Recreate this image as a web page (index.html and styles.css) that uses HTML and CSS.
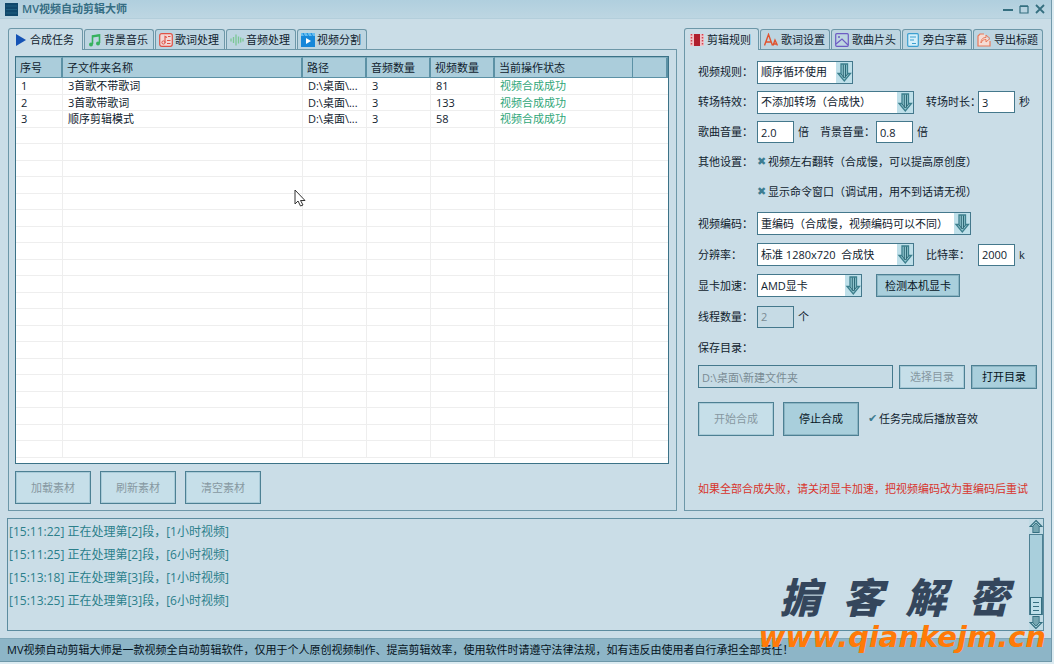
FILE: index.html
```html
<!DOCTYPE html>
<html lang="zh-CN">
<head>
<meta charset="utf-8">
<title>MV视频自动剪辑大师</title>
<link rel="stylesheet" href="styles.css">
</head>
<body>
<svg class="defs" aria-hidden="true">
  <symbol id="arrow-down" viewBox="0 0 16 20">
    <path d="M5 1.500h6.500V11h3L8.300 18.500 2 11h3z" fill="#8fc4cd" stroke="#3d7f8d" stroke-width="1.300"/>
    <path d="M7.300 2v13M9.500 2v13M5 11.500l3.300 4 3.300-4" fill="none" stroke="#2d6876" stroke-width="1"/>
  </symbol>
  <symbol id="scroll-up" viewBox="0 0 14 14">
    <path d="M7 1 13 7h-3v6H4V7H1z" fill="#a9d2da" stroke="#356f80" stroke-width="1.200"/>
    <path d="M6 4v9M8 4v9M4 6.500l3-3 3 3" fill="none" stroke="#356f80" stroke-width=".9"/>
  </symbol>
</svg>
<div class="window">
  <header class="titlebar">
    <svg class="app-icon" width="13" height="13" viewBox="0 0 13 13"><path fill="#10486b" d="M0 0h13v13H0z"/><path d="M1 3h11M1 6.500h11M1 10h11" stroke="#1f5f80"/></svg>
    <h1>MV视频自动剪辑大师</h1>
    <div class="window-buttons">
      <button aria-label="最小化"><svg width="10" height="10"><path d="M0 6h10" stroke="#356f80" stroke-width="2"/></svg></button>
      <button aria-label="最大化"><svg width="10" height="10"><path d="M1 2.500h8v6.500H1z" fill="none" stroke="#356f80" stroke-width="1.200"/><path d="M1 2h8" stroke="#356f80" stroke-width="1.500"/></svg></button>
      <button aria-label="关闭"><svg width="10" height="10"><path d="m1 1 8 8M9 1 1 9" stroke="#356f80" stroke-width="1.800"/></svg></button>
    </div>
  </header>

  <main class="workspace">
    <section class="group tasks">
      <div class="tabs" role="tablist">
        <button class="tab active" role="tab" aria-selected="true"><svg viewBox="0 0 14 14"><path d="M2 1v12l10-6z" fill="#1553b5"/></svg>合成任务</button>
        <button class="tab" role="tab"><svg viewBox="0 0 14 14"><path d="M4.500 11V3l7-1v8" fill="none" stroke="#36b25e" stroke-width="1.600"/><path d="M4.500 3.500l7-1" stroke="#36b25e" stroke-width="2"/><circle cx="3" cy="11.500" r="2" fill="#36b25e"/><circle cx="10" cy="10.500" r="2" fill="#36b25e"/></svg>背景音乐</button>
        <button class="tab" role="tab"><svg viewBox="0 0 14 14"><rect x=".7" y=".7" width="12.600" height="12.600" rx="2" fill="#f3d8d6" stroke="#e05245" stroke-width="1.200"/><path d="M6 10V3.500l2 1M8 7.500h3.500M8 10.500h3.500M9 3.500h2.500" fill="none" stroke="#e05245" stroke-width="1.100"/><circle cx="4.500" cy="9.500" r="1.600" fill="none" stroke="#e05245"/></svg>歌词处理</button>
        <button class="tab" role="tab"><svg viewBox="0 0 14 14"><path d="M1 5.500v3M3.500 4v6M6 1.500v11M8.500 3.500v7M10.700 4.500v5M13 5.500v3" stroke="#7cc795" stroke-width="1.300"/></svg>音频处理</button>
        <button class="tab" role="tab"><svg viewBox="0 0 14 14"><path fill="#1687d9" d="M0 2h14v12H0z"/><path fill="#66bdf0" d="M0 0h14v3H0z"/><path d="m2 0 1.500 3M6 0l1.500 3M10 0l1.500 3" stroke="#1687d9"/><path d="M5 5v6l5-3z" fill="#fff"/></svg>视频分割</button>
      </div>
      <div class="panel task-panel" role="tabpanel">
        <div class="table-box">
          <table>
            <colgroup><col class="c-no"><col><col class="c-path"><col class="c-num"><col class="c-num"><col class="c-state"><col class="c-end"></colgroup>
            <thead><tr><th>序号</th><th>子文件夹名称</th><th>路径</th><th>音频数量</th><th>视频数量</th><th>当前操作状态</th><th></th></tr></thead>
            <tbody>
              <tr><td>1</td><td>3首歌不带歌词</td><td>D:\桌面\...</td><td>3</td><td>81</td><td class="ok">视频合成成功</td><td></td></tr>
              <tr><td>2</td><td>3首歌带歌词</td><td>D:\桌面\...</td><td>3</td><td>133</td><td class="ok">视频合成成功</td><td></td></tr>
              <tr><td>3</td><td>顺序剪辑模式</td><td>D:\桌面\...</td><td>3</td><td>58</td><td class="ok">视频合成成功</td><td></td></tr>
              <tr><td></td><td></td><td></td><td></td><td></td><td></td><td></td></tr>
              <tr><td></td><td></td><td></td><td></td><td></td><td></td><td></td></tr>
              <tr><td></td><td></td><td></td><td></td><td></td><td></td><td></td></tr>
              <tr><td></td><td></td><td></td><td></td><td></td><td></td><td></td></tr>
              <tr><td></td><td></td><td></td><td></td><td></td><td></td><td></td></tr>
              <tr><td></td><td></td><td></td><td></td><td></td><td></td><td></td></tr>
              <tr><td></td><td></td><td></td><td></td><td></td><td></td><td></td></tr>
              <tr><td></td><td></td><td></td><td></td><td></td><td></td><td></td></tr>
              <tr><td></td><td></td><td></td><td></td><td></td><td></td><td></td></tr>
              <tr><td></td><td></td><td></td><td></td><td></td><td></td><td></td></tr>
              <tr><td></td><td></td><td></td><td></td><td></td><td></td><td></td></tr>
              <tr><td></td><td></td><td></td><td></td><td></td><td></td><td></td></tr>
              <tr><td></td><td></td><td></td><td></td><td></td><td></td><td></td></tr>
              <tr><td></td><td></td><td></td><td></td><td></td><td></td><td></td></tr>
              <tr><td></td><td></td><td></td><td></td><td></td><td></td><td></td></tr>
              <tr><td></td><td></td><td></td><td></td><td></td><td></td><td></td></tr>
              <tr><td></td><td></td><td></td><td></td><td></td><td></td><td></td></tr>
              <tr><td></td><td></td><td></td><td></td><td></td><td></td><td></td></tr>
              <tr><td></td><td></td><td></td><td></td><td></td><td></td><td></td></tr>
              <tr><td></td><td></td><td></td><td></td><td></td><td></td><td></td></tr>
            </tbody>
          </table>
        </div>
        <div class="actions">
          <button class="btn large" disabled>加载素材</button>
          <button class="btn large" disabled>刷新素材</button>
          <button class="btn large" disabled>清空素材</button>
        </div>
      </div>
    </section>

    <section class="group rules">
      <div class="tabs" role="tablist">
        <button class="tab active" role="tab" aria-selected="true"><svg viewBox="0 0 14 14"><path fill="#f0c3c8" d="M0 1h14v12H0z"/><path fill="#b01f2e" d="M4 1h6v12H4z"/><path d="M1.500 1v12M12.500 1v12" stroke="#d04452" stroke-width="1.500" stroke-dasharray="1.500 1.500"/></svg>剪辑规则</button>
        <button class="tab" role="tab"><svg viewBox="0 0 14 14"><path d="M.5 12.500 4.500 1.500l4 11M2 9h5M9 12.500l2-5.500 2.500 5.500M9.500 11h3.500" fill="none" stroke="#e0532f" stroke-width="1.400"/></svg>歌词设置</button>
        <button class="tab" role="tab"><svg viewBox="0 0 14 14"><rect x=".7" y=".7" width="12.600" height="12.600" rx="1" fill="none" stroke="#6d5cc4" stroke-width="1.200"/><path d="m1 11 6-5 6 6" fill="none" stroke="#6d5cc4" stroke-width="1.200"/><circle cx="4" cy="4" r="1" fill="#6d5cc4"/></svg>歌曲片头</button>
        <button class="tab" role="tab"><svg viewBox="0 0 14 14"><rect x="1.700" y=".7" width="10.600" height="12.600" rx="1" fill="#d4effb" stroke="#3d9fd0" stroke-width="1.200"/><path d="M4 4h6M4 7h4M6 10.500h4" stroke="#3d9fd0" stroke-width="1.200"/></svg>旁白字幕</button>
        <button class="tab" role="tab"><svg viewBox="0 0 14 14"><path d="M7 1H3L1 3v10h12V8" fill="#f5dcd5" stroke="#ea7a5b" stroke-width="1.200"/><path d="M4 10c0-4 2-5.500 5-5.500V2l4 3.500L9 9V6.500c-2 0-4 .5-5 3.500z" fill="none" stroke="#ea7a5b"/></svg>导出标题</button>
      </div>
      <div class="panel rule-panel" role="tabpanel">
        <div class="rows">
          <div class="row"><label for="rule">视频规则：</label><span class="combo"><select id="rule" class="w-s"><option>顺序循环使用</option></select><svg><use href="#arrow-down"/></svg></span></div>
          <div class="row"><label for="fx">转场特效：</label><span class="combo"><select id="fx" class="w-m"><option>不添加转场（合成快）</option></select><svg><use href="#arrow-down"/></svg></span><label class="second" for="fxlen">转场时长：</label><input class="num" id="fxlen" value="3"><span class="unit">秒</span></div>
          <div class="row"><label for="vol">歌曲音量：</label><input class="num" id="vol" value="2.0"><span class="unit">倍</span><label class="third" for="bgvol">背景音量：</label><input class="num" id="bgvol" value="0.8"><span class="unit">倍</span></div>
          <div class="row"><span class="label">其他设置：</span><label class="check"><input type="checkbox">视频左右翻转（合成慢，可以提高原创度）</label></div>
          <div class="row"><span class="label"></span><label class="check"><input type="checkbox">显示命令窗口（调试用，用不到话请无视）</label></div>
        </div>
        <div class="rows tall">
          <div class="row"><label for="codec">视频编码：</label><span class="combo"><select id="codec" class="w-l"><option>重编码（合成慢，视频编码可以不同）</option></select><svg><use href="#arrow-down"/></svg></span></div>
          <div class="row"><label for="res">分辨率：</label><span class="combo"><select id="res" class="w-m"><option>标准 1280x720&nbsp; 合成快</option></select><svg><use href="#arrow-down"/></svg></span><label class="second" for="rate">比特率：</label><input class="num" id="rate" value="2000"><span class="unit">k</span></div>
          <div class="row"><label for="gpu">显卡加速：</label><span class="combo"><select id="gpu" class="w-g"><option>AMD显卡</option></select><svg><use href="#arrow-down"/></svg></span><button class="btn detect">检测本机显卡</button></div>
          <div class="row"><label for="threads">线程数量：</label><input class="num" id="threads" value="2" disabled><span class="unit">个</span></div>
          <div class="row"><label for="dir">保存目录：</label></div>
        </div>
        <div class="dir-row"><input id="dir" value="D:\桌面\新建文件夹" disabled><button class="btn" disabled>选择目录</button><button class="btn">打开目录</button></div>
        <div class="run-row"><button class="btn large" disabled>开始合成</button><button class="btn large">停止合成</button><label class="check"><input type="checkbox" checked>任务完成后播放音效</label></div>
        <p class="warning">如果全部合成失败，请关闭显卡加速，把视频编码改为重编码后重试</p>
      </div>
    </section>
  </main>

  <section class="log">
    <ul>
      <li>[15:11:22] 正在处理第[2]段，[1小时视频]</li>
      <li>[15:11:25] 正在处理第[2]段，[6小时视频]</li>
      <li>[15:13:18] 正在处理第[3]段，[1小时视频]</li>
      <li>[15:13:25] 正在处理第[3]段，[6小时视频]</li>
    </ul>
    <div class="scrollbar">
      <svg><use href="#scroll-up"/></svg>
      <div class="track"><div class="thumb"></div></div>
      <svg class="flip"><use href="#scroll-up"/></svg>
    </div>
  </section>

  <footer class="status">MV视频自动剪辑大师是一款视频全自动剪辑软件，仅用于个人原创视频制作、提高剪辑效率，使用软件时请遵守法律法规，如有违反由使用者自行承担全部责任！</footer>

  <div class="watermark">
    <div class="mark-name"><span>掮</span><span>客</span><span>解</span><span>密</span></div>
    <div class="mark-url">www.qiankejm.cn</div>
  </div>
  <svg class="cursor" width="12" height="18" viewBox="0 0 12 18"><path d="M1 1v14l3-3 2.500 5 2.500-1-2.500-4.500H11z" fill="#fff" stroke="#333"/></svg>
</div>
</body>
</html>
```
FILE: styles.css
```css
* { box-sizing: border-box; }

body {
  margin: 0;
  background: #dcebf1;
  color: #10222e;
  font: 11px/16px "Open Sans", "Noto Sans CJK SC", sans-serif;
}

button, input, select { font: inherit; color: inherit; margin: 0; }
h1, p, ul { margin: 0; padding: 0; }
ul { list-style: none; }
.defs { display: none; }

.window {
  position: relative;
  display: flex;
  flex-direction: column;
  min-height: calc(100vh - 2px);
  margin-right: 2px;
  border-right: 1px solid #7299ab;
  background: #cadde7;
  overflow: hidden;
}

.titlebar {
  display: flex;
  align-items: center;
  gap: 4px;
  height: 19px;
  padding: 0 6px 0 5px;
  background: linear-gradient(#b0cfde, #bdd6e2);
  border-bottom: 1px solid #b3cedb;
}
.titlebar h1 { font-size: 11px; font-weight: 600; color: #356d83; }
.window-buttons { display: flex; gap: 6px; margin-left: auto; }
.window-buttons button { display: flex; padding: 0; border: 0; background: none; }

.workspace { display: flex; flex: 1; gap: 7px; padding: 9px 8px 0; }
.group { display: flex; flex-direction: column; }
.tasks { flex: 1; min-width: 0; }
.rules { flex: none; }

.tabs { display: flex; align-items: flex-end; gap: 1px; height: 21px; }
.tab {
  display: flex;
  align-items: center;
  gap: 2px;
  width: 70px;
  height: 20px;
  padding: 0 0 0 3px;
  white-space: nowrap;
  border: 1px solid #6d97a8;
  border-bottom: 0;
  border-radius: 3px 3px 0 0;
  background: #bdd5e1;
}
.tab.active {
  position: relative;
  width: 75px;
  height: 22px;
  margin-bottom: -1px;
  padding-left: 5px;
  background: #cadde7;
}
.rules .tab { gap: 3px; }
.tab svg { width: 14px; height: 14px; flex: none; }

.panel { flex: 1; border: 1px solid #6d97a8; }
.task-panel { display: flex; flex-direction: column; padding: 6px 7px 6px 6px; }
.table-box { flex: 1; border: 1px solid #3b7287; background: #fff; }
table { width: 100%; table-layout: fixed; border-collapse: separate; border-spacing: 0; }
.c-no { width: 47px; }
.c-path { width: 64px; }
.c-num { width: 64px; }
.c-state { width: 138px; }
.c-end { width: 35px; }
th {
  height: 21px;
  padding: 0 4px;
  text-align: left;
  font-weight: 400;
  line-height: 16px;
  background: #abcddb;
  border-right: 2px solid #5c91a5;
  border-top: 1px solid #87b1c1;
  border-bottom: 1px solid #5c91a5;
}
th:nth-child(6) { border-right-width: 1px; }
td {
  height: 16px;
  padding: 0 5px;
  line-height: 14px;
  white-space: nowrap;
  border-right: 1px solid #eeeeee;
  border-bottom: 1px solid #eeeeee;
}
tr:nth-child(odd) td { height: 17px; }
td:last-child { border-right: 0; }
.ok { color: #2fa678; }

.actions { display: flex; gap: 9px; padding-top: 7px; }
.btn {
  height: 24px;
  padding: 0 10px;
  border: 1px solid #4d8093;
  outline: 1px solid #8ab4c3;
  outline-offset: -2px;
  background: #a9cfdc;
  color: #05141c;
}
.btn:disabled { background: #c6dfe9; color: #8798a1; outline-color: #a9cbd8; }
.btn.large { width: 76px; height: 34px; padding: 0; }
.actions .btn.large { height: 33px; }
.btn.detect { height: 23px; padding: 0 8px; margin-left: 14px; }

.rule-panel { display: flex; flex-direction: column; padding: 7px 5px 13px 13px; }
.row { display: flex; align-items: center; height: 30px; }
.tall { padding-top: 1px; }
.tall .row { height: 31px; }
.row > label:first-child, .row > .label { width: 59px; }
.row .second { width: 52px; margin-left: 12px; white-space: nowrap; overflow: visible; }
.row .third { width: 56px; margin-left: 11px; }
.unit { margin-left: 4px; }
input.num, #dir {
  height: 22px;
  padding: 0 3px;
  border: 1px solid #44788c;
  border-radius: 0;
  background: #fff;
}
.num { width: 37px; }
input.num:disabled, #dir:disabled { background: #c6dbe5; color: #7a8b94; }

.combo { position: relative; display: flex; }
select {
  appearance: none;
  height: 23px;
  padding: 0 18px 0 3px;
  border: 1px solid #44788c;
  border-radius: 0;
  background: #fff;
}
.combo svg {
  position: absolute;
  top: 1px;
  right: 1px;
  width: 16px;
  height: 21px;
  background: #bfe0ea;
  pointer-events: none;
}
.w-s { width: 96px; }
.w-m { width: 157px; }
.w-l { width: 214px; }
.w-g { width: 105px; }

.check { display: flex; align-items: center; gap: 1px; }
.check input { appearance: none; display: flex; width: 10px; height: 14px; }
.check input::before {
  content: "✖";
  font: 11px/14px "DejaVu Sans", sans-serif;
  color: #3d7c91;
}
.check input:checked::before { content: "✔"; }

.dir-row { display: flex; align-items: center; gap: 6px; height: 27px; }
#dir { flex: 1; min-width: 0; height: 23px; }
.run-row { display: flex; align-items: center; gap: 9px; padding-top: 12px; }
.warning { margin-top: auto; color: #d8342c; }

.log {
  display: flex;
  height: 113px;
  margin: 7px;
  border: 1px solid #5c8c9f;
}
.log ul { flex: 1; padding: 1px; }
.log li { color: #2b7f8b; font-size: 12px; line-height: 23px; }
.scrollbar { display: flex; flex-direction: column; width: 14px; background: #c0dbe5; }
.scrollbar svg { width: 14px; height: 15px; }
.scrollbar .flip { transform: rotate(180deg); }
.track {
  display: flex;
  flex: 1;
  align-items: flex-end;
  border: 1px solid #4d8093;
  border-bottom: 0;
  background: #a9cfdc;
}
.thumb {
  flex: 1;
  height: 18px;
  border: 1px solid #356f80;
  background: repeating-linear-gradient(#bfe0ea 0 3px, #356f80 3px 4px) content-box, #bfe0ea;
  padding: 1px 2px;
}

.status {
  height: 24px;
  padding: 0 7px;
  line-height: 22px;
  white-space: nowrap;
  border-top: 1px solid #7fa8b9;
  border-bottom: 1px solid #6d97a8;
  background: #8db5c7;
  color: #04121b;
}

.watermark {
  position: absolute;
  right: 5px;
  bottom: 9px;
  pointer-events: none;
}
.mark-name {
  display: flex;
  justify-content: center;
  gap: 22px;
  padding-right: 16px;
  color: #34465c;
  font: italic 900 41px/44px "DejaVu Sans", "Noto Sans CJK SC", sans-serif;
}
.mark-url { color: #ff7a08; font: italic 700 29px/32px "DejaVu Sans", sans-serif; }

.cursor { position: absolute; left: 294px; top: 189px; }
```
